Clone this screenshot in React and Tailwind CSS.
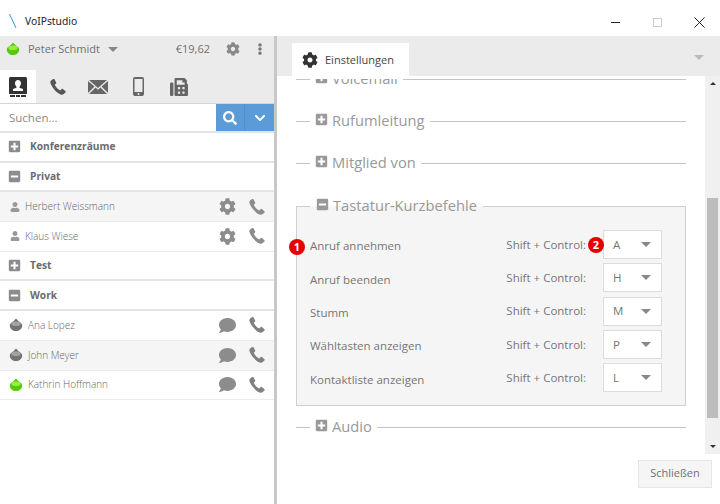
import { FaCog, FaComment, FaFax, FaSearch, FaChevronDown, FaPlusSquare, FaMinusSquare, FaUser, FaEllipsisV } from "react-icons/fa";

function Phone({ size = 20, className = "" }) {
    return (
        <svg width={size} height={size} viewBox="0 0 20 20" className={className} fill="currentColor">
            <path d="M4.600 1.200 2.600 2.600C1.400 3.500 1.200 4.800 1.800 6.200 3.800 11.500 8.500 16.500 13 18.400 14.300 19 15.500 18.700 16.400 17.900L18.300 16C18.700 15.600 18.700 15.100 18.300 14.700L15.400 12.200C15 11.900 14.500 11.900 14.100 12.300L12.600 13.900C10.200 12.800 7.600 10 6.400 7.400L7.800 6.200C8.200 5.800 8.300 5.300 8 4.900L6.100 1.500C5.700 1 5.100.9 4.600 1.200Z" />
        </svg>
    );
}

function Status({ green }) {
    const body = green ? "#58c80a" : "#737373";
    const shine = green ? "#96ee45" : "#a3a3a3";
    return (
        <svg width="14" height="14" viewBox="0 0 14 14">
            <path d="M7 .500 9.500 3.300C11 3.800 13.200 5.800 13.200 7.400 13.200 10.500 10.200 13 7 13 3.800 13 .800 10.500 .800 7.400 .800 5.800 3 3.800 4.500 3.300Z" fill={body} />
            <ellipse cx="7" cy="5.800" rx="4.600" ry="2.300" fill={shine} />
        </svg>
    );
}

function Contacts() {
    return (
        <svg width="18" height="20" viewBox="0 0 18 20" fill="#333">
            <path d="M1.500 0h15c.8 0 1.500.7 1.500 1.500V17H0V1.500C0 .7.700 0 1.500 0Z" />
            <path d="M9 3c1.800 0 3 1.300 3 3.300 0 1.500-.7 2.700-1.500 3.400v1l3.500 1.300V14H4v-1.900l3.500-1.300v-1C6.700 9 6 7.800 6 6.300 6 4.300 7.200 3 9 3Z" fill="#fff" />
            <rect x="1" y="18" width="5" height="2" />
            <rect x="7" y="18" width="4" height="2" />
            <rect x="12" y="18" width="5" height="2" />
        </svg>
    );
}

function Envelope() {
    return (
        <svg width="20" height="14" viewBox="0 0 20 14" fill="#666">
            <path d="M1 0h18L10 8Z" />
            <path d="M0 1v12l6.500-6.500Z" />
            <path d="M20 1v12l-6.500-6.500Z" />
            <path d="M7.500 7.500 10 9.800l2.500-2.300L19 14H1Z" />
        </svg>
    );
}

function Mobile() {
    return (
        <svg width="11" height="19" viewBox="0 0 11 19">
            <rect width="11" height="19" rx="2" fill="#666" />
            <rect x="1.500" y="2" width="8" height="13" fill="#ebebeb" />
            <circle cx="5.500" cy="17" r="1" fill="#ebebeb" />
        </svg>
    );
}

function Caret({ className = "" }) {
    return <span className={`inline-block h-0 w-0 border-x-[5px] border-t-[5px] border-x-transparent ${className}`} />;
}

const contacts1 = [
    { name: "Herbert Weissmann", alt: true },
    { name: "Klaus Wiese", alt: false },
];

const contacts2 = [
    { name: "Ana Lopez", alt: false, green: false },
    { name: "John Meyer", alt: true, green: false },
    { name: "Kathrin Hoffmann", alt: false, green: true },
];

const shortcuts = [
    { label: "Anruf annehmen", key: "A" },
    { label: "Anruf beenden", key: "H" },
    { label: "Stumm", key: "M" },
    { label: "Wähltasten anzeigen", key: "P" },
    { label: "Kontaktliste anzeigen", key: "L" },
];

function Group({ name, open }) {
    return (
        <div className="flex h-[29.700px] items-center border-b-2 border-[#e4e4e4] pl-2 text-[10.200px] font-bold text-[#6b6b6b]">
            {open ? <FaMinusSquare size={13} className="text-[#8c8c8c]" /> : <FaPlusSquare size={13} className="text-[#8c8c8c]" />}
            <span className="ml-[9px]">{name}</span>
        </div>
    );
}

function Section({ name, className = "" }) {
    return (
        <fieldset className={`mx-[19px] border-t border-[#c4c4c4] ${className}`}>
            <legend className="ml-[14px] flex h-[20px] items-center px-[5px] pb-[2px] text-[14.700px] leading-[20px] text-[#999]">
                <FaPlusSquare size={13} className="mr-[4px] -mt-[2px] text-[#999]" />
                {name}
            </legend>
        </fieldset>
    );
}

export default function App() {
    return (
        <div className="flex h-[504px] w-[720px] flex-col overflow-hidden bg-white font-['Open_Sans',sans-serif]">
            {/* title bar */}
            <div className="flex h-[36px] shrink-0 items-center pt-[8px]">
                <svg width="10" height="16" viewBox="0 0 10 16" className="ml-[8px] mt-[-2px]">
                    <path d="M1.500 1 8 15" stroke="#2a9fd8" strokeWidth="1" fill="none" />
                </svg>
                <span className="ml-[7px] font-['Noto_Sans',sans-serif] text-[10.300px] text-[#222]">VoIPstudio</span>
                <div className="ml-auto flex items-center">
                    <span className="mr-[33px] h-[1px] w-[9px] bg-[#222]" />
                    <span className="mr-[32px] h-[9px] w-[9px] border border-[#ccc]" />
                    <svg width="11" height="11" viewBox="0 0 11 11" className="mr-[15px]">
                        <path d="M.5.5l10 10M10.500.5l-10 10" stroke="#222" strokeWidth="1" />
                    </svg>
                </div>
            </div>

            <div className="flex min-h-0 flex-1">
                {/* left panel */}
                <div className="flex w-[274px] shrink-0 flex-col">
                    <div className="flex h-[34px] items-center bg-[#ebebeb] pb-[8px] pl-[6px] text-[11px] text-[#707070]">
                        <Status green />
                        <span className="ml-[8px]">Peter Schmidt</span>
                        <Caret className="ml-[8px] border-t-[#888]" />
                        <span className="ml-auto">€19,62</span>
                        <FaCog size={14} className="ml-[16px] text-[#888]" />
                        <FaEllipsisV size={12} className="ml-[14px] mr-[8px] text-[#777]" />
                    </div>
                    <div className="flex h-[34px] items-stretch border-b border-[#d4d4d4] bg-[#ebebeb]">
                        <div className="flex w-[36px] items-center justify-center bg-white">
                            <Contacts />
                        </div>
                        <div className="flex w-[44px] items-center justify-center text-[#555]">
                            <Phone size={18} />
                        </div>
                        <div className="flex w-[35px] items-center justify-center">
                            <Envelope />
                        </div>
                        <div className="flex w-[47px] items-center justify-center">
                            <Mobile />
                        </div>
                        <div className="flex w-[33px] items-center justify-center text-[#666]">
                            <FaFax size={18} />
                        </div>
                    </div>
                    <div className="flex h-[29px] border-b-2 border-[#e4e4e4]">
                        <span className="flex-1 pl-[9px] text-[11.500px] leading-[27px] text-[#888]">Suchen...</span>
                        <div className="flex w-[29px] items-center justify-center border-r border-[#4f90cc] bg-[#5b9bd8] text-white">
                            <FaSearch size={14} />
                        </div>
                        <div className="flex w-[29px] items-center justify-center bg-[#5b9bd8] text-white">
                            <FaChevronDown size={12} />
                        </div>
                    </div>
                    <Group name="Konferenzräume" />
                    <Group name="Privat" open />
                    {contacts1.map((c) => (
                        <div key={c.name} className={`flex h-[29.700px] items-center border-b border-[#ececec] pl-[10px] pr-[8px] text-[10px] font-light text-[#666] ${c.alt ? "bg-[#f5f5f5]" : "bg-white"}`}>
                            <FaUser size={10} className="text-[#999]" />
                            <span className="ml-[5px]">{c.name}</span>
                            <FaCog size={17} className="ml-auto text-[#8c8c8c]" />
                            <Phone size={18} className="ml-[12px] text-[#8c8c8c]" />
                        </div>
                    ))}
                    <Group name="Test" />
                    <Group name="Work" open />
                    {contacts2.map((c) => (
                        <div key={c.name} className={`flex h-[29.700px] items-center border-b border-[#ececec] pl-[9px] pr-[8px] text-[10px] font-light text-[#666] ${c.alt ? "bg-[#f5f5f5]" : "bg-white"}`}>
                            <Status green={c.green} />
                            <span className="ml-[5px]">{c.name}</span>
                            <FaComment size={17} className="ml-auto text-[#8c8c8c]" />
                            <Phone size={18} className="ml-[12px] text-[#808080]" />
                        </div>
                    ))}
                </div>

                {/* splitter */}
                <div className="w-[3px] shrink-0 bg-[#c8c8c8]" />

                {/* right panel */}
                <div className="relative flex min-w-0 flex-1 flex-col">
                    <div className="flex h-[40px] shrink-0 items-end justify-between bg-[#ebebeb] pl-[15px] pr-[16px]">
                        <div className="z-10 -mb-[3px] flex h-[36px] w-[117px] items-center bg-white pb-[2px] pl-[10px] text-[11px] text-[#444]">
                            <FaCog size={16} className="text-[#333]" />
                            <span className="ml-[7px]">Einstellungen</span>
                        </div>
                        <Caret className="mb-[16px] border-t-[#bbb]" />
                    </div>
                    <div className="flex min-h-0 h-[378px] shrink-0">
                        <div className="min-w-0 flex-1 overflow-hidden">
                            <div className="-mt-[7px]">
                                <Section name="Voicemail" />
                                <Section name="Rufumleitung" className="mt-[22px]" />
                                <Section name="Mitglied von" className="mt-[22px]" />
                                <fieldset className="relative mx-[19px] mt-[23px] h-[210px] border border-[#cfcfcf] bg-[#f5f5f5] px-[13px]">
                                    <legend className="flex h-[20px] items-center px-[6px] pb-[2px] text-[14.700px] leading-[20px] text-[#999]">
                                        <FaMinusSquare size={13} className="mr-[4px] -mt-[2px]" />
                                        Tastatur-Kurzbefehle
                                    </legend>
                                    <span className="absolute left-[-8px] top-[23px] flex h-[16px] w-[16px] items-center justify-center rounded-full bg-[#e60000] text-[11px] font-bold text-white">1</span>
                                    <div className="mt-[14px] flex flex-col gap-[4.300px]">
                                        {shortcuts.map((s, i) => (
                                            <div key={s.key} className="relative flex h-[29px] items-center text-[11.500px] text-[#757575]">
                                                <span className="mt-[3px]">{s.label}</span>
                                                <span className="ml-auto">Shift + Control:</span>
                                                {i === 0 && (
                                                    <span className="absolute left-[278px] top-[7px] flex h-[16px] w-[16px] items-center justify-center rounded-full bg-[#e60000] text-[11px] font-bold text-white">2</span>
                                                )}
                                                <div className="mr-[10px] ml-[17px] flex h-[29px] w-[59px] items-center justify-between border border-[#dcdcdc] bg-white pl-[9px] pr-[10px]">
                                                    <span>{s.key}</span>
                                                    <Caret className="border-t-[#888]" />
                                                </div>
                                            </div>
                                        ))}
                                    </div>
                                </fieldset>
                                <Section name="Audio" className="mt-[11px]" />
                            </div>
                        </div>
                        {/* scrollbar */}
                        <div className="flex w-[15px] shrink-0 flex-col bg-[#f0f0f0]">
                            <div className="flex h-[15px] items-center justify-center">
                                <span className="h-0 w-0 border-x-[3px] border-b-[3px] border-x-transparent border-b-[#333]" />
                            </div>
                            <div className="mx-[2px] mt-[107px] h-[220px] bg-[#bcbcbc]" />
                            <div className="mt-auto flex h-[15px] items-center justify-center">
                                <span className="h-0 w-0 border-x-[3px] border-t-[3px] border-x-transparent border-t-[#333]" />
                            </div>
                        </div>
                    </div>
                    <div className="flex flex-1 items-start justify-end pr-[8px] pt-[6px]">
                        <div className="flex h-[28px] w-[74px] items-center justify-center border border-[#e6e6e6] bg-[#f5f5f5] pb-[1px] text-[11px] text-[#707070]">Schließen</div>
                    </div>
                </div>
            </div>
        </div>
    );
}
